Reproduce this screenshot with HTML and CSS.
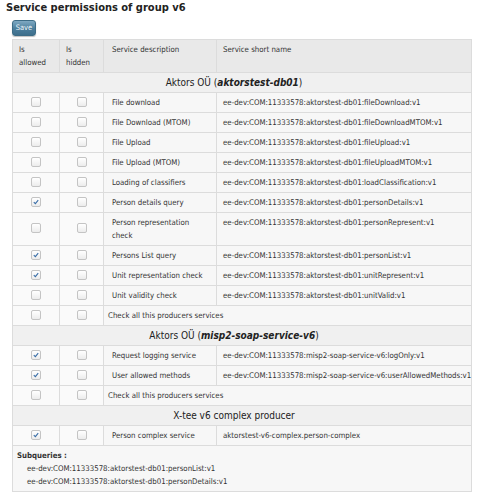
FILE: index.html
```html
<!DOCTYPE html>
<html>
<head>
<meta charset="utf-8">
<link rel="stylesheet" href="styles.css">
</head>
<body>
<h2 class="title">Service permissions of group v6</h2>
<div class="content">
  <button class="save">Save</button>
  <table class="perm">
    <colgroup><col class="c1"><col class="c2"><col class="c3"><col class="c4"></colgroup>
    <thead>
      <tr><th>Is<br>allowed</th><th>Is<br>hidden</th><th class="desc">Service description</th><th>Service short name</th></tr>
    </thead>
    <tbody>
      <tr class="group"><td colspan="4">Aktors OÜ (<i>aktorstest-db01</i>)</td></tr>
      <tr><td class="cb"><span class="box"></span></td><td class="cb"><span class="box"></span></td><td class="desc">File download</td><td>ee-dev:COM:11333578:aktorstest-db01:fileDownload:v1</td></tr>
      <tr><td class="cb"><span class="box"></span></td><td class="cb"><span class="box"></span></td><td class="desc">File Download (MTOM)</td><td>ee-dev:COM:11333578:aktorstest-db01:fileDownloadMTOM:v1</td></tr>
      <tr><td class="cb"><span class="box"></span></td><td class="cb"><span class="box"></span></td><td class="desc">File Upload</td><td>ee-dev:COM:11333578:aktorstest-db01:fileUpload:v1</td></tr>
      <tr><td class="cb"><span class="box"></span></td><td class="cb"><span class="box"></span></td><td class="desc">File Upload (MTOM)</td><td>ee-dev:COM:11333578:aktorstest-db01:fileUploadMTOM:v1</td></tr>
      <tr><td class="cb"><span class="box"></span></td><td class="cb"><span class="box"></span></td><td class="desc">Loading of classifiers</td><td>ee-dev:COM:11333578:aktorstest-db01:loadClassification:v1</td></tr>
      <tr><td class="cb"><span class="box checked"><svg viewBox="0 0 9 9"><path d="M2 4.6 L3.8 6.4 L7 2.4"/></svg></span></td><td class="cb"><span class="box"></span></td><td class="desc">Person details query</td><td>ee-dev:COM:11333578:aktorstest-db01:personDetails:v1</td></tr>
      <tr><td class="cb"><span class="box"></span></td><td class="cb"><span class="box"></span></td><td class="desc">Person representation check</td><td class="top">ee-dev:COM:11333578:aktorstest-db01:personRepresent:v1</td></tr>
      <tr><td class="cb"><span class="box checked"><svg viewBox="0 0 9 9"><path d="M2 4.6 L3.8 6.4 L7 2.4"/></svg></span></td><td class="cb"><span class="box"></span></td><td class="desc">Persons List query</td><td>ee-dev:COM:11333578:aktorstest-db01:personList:v1</td></tr>
      <tr><td class="cb"><span class="box checked"><svg viewBox="0 0 9 9"><path d="M2 4.6 L3.8 6.4 L7 2.4"/></svg></span></td><td class="cb"><span class="box"></span></td><td class="desc">Unit representation check</td><td>ee-dev:COM:11333578:aktorstest-db01:unitRepresent:v1</td></tr>
      <tr><td class="cb"><span class="box"></span></td><td class="cb"><span class="box"></span></td><td class="desc">Unit validity check</td><td>ee-dev:COM:11333578:aktorstest-db01:unitValid:v1</td></tr>
      <tr class="all"><td class="cb"><span class="box"></span></td><td class="cb"><span class="box"></span></td><td class="checkall" colspan="2">Check all this producers services</td></tr>
      <tr class="group"><td colspan="4">Aktors OÜ (<i>misp2-soap-service-v6</i>)</td></tr>
      <tr><td class="cb"><span class="box checked"><svg viewBox="0 0 9 9"><path d="M2 4.6 L3.8 6.4 L7 2.4"/></svg></span></td><td class="cb"><span class="box"></span></td><td class="desc">Request logging service</td><td>ee-dev:COM:11333578:misp2-soap-service-v6:logOnly:v1</td></tr>
      <tr><td class="cb"><span class="box checked"><svg viewBox="0 0 9 9"><path d="M2 4.6 L3.8 6.4 L7 2.4"/></svg></span></td><td class="cb"><span class="box"></span></td><td class="desc">User allowed methods</td><td>ee-dev:COM:11333578:misp2-soap-service-v6:userAllowedMethods:v1</td></tr>
      <tr class="all"><td class="cb"><span class="box"></span></td><td class="cb"><span class="box"></span></td><td class="checkall" colspan="2">Check all this producers services</td></tr>
      <tr class="group"><td colspan="4">X-tee v6 complex producer</td></tr>
      <tr><td class="cb"><span class="box checked"><svg viewBox="0 0 9 9"><path d="M2 4.6 L3.8 6.4 L7 2.4"/></svg></span></td><td class="cb"><span class="box"></span></td><td class="desc">Person complex service</td><td>aktorstest-v6-complex.person-complex</td></tr>
      <tr class="sub"><td colspan="4"><b>Subqueries :</b><div class="subline">ee-dev:COM:11333578:aktorstest-db01:personList:v1</div><div class="subline">ee-dev:COM:11333578:aktorstest-db01:personDetails:v1</div></td></tr>
    </tbody>
  </table>
</div>
</body>
</html>
```
FILE: styles.css
```css
html, body {
  margin: 0;
  padding: 0;
  background: #ffffff;
}
body {
  font-family: "DejaVu Sans Condensed", "DejaVu Sans", sans-serif;
  font-stretch: condensed;
  color: #333333;
  font-size: 7.8px;
}
.title {
  margin: 0;
  padding: 1px 0 0 6px;
  font-size: 11px;
  line-height: 14px;
  font-weight: bold;
  color: #222222;
}
.content {
  padding: 5px 0 0 12px;
}
.save {
  display: block;
  width: 24px;
  height: 16px;
  padding: 0;
  margin: 0 0 3px 0;
  border: 1px solid #3d6c86;
  border-radius: 3px;
  background: linear-gradient(#7fa9c2, #4b7e9c 55%, #3e6f8c);
  color: #eef5f9;
  font-family: inherit;
  font-stretch: condensed;
  font-size: 7.5px;
  line-height: 14px;
  box-shadow: 0 1px 1px rgba(0,0,0,0.25);
}
.perm {
  width: 459px;
  table-layout: fixed;
  border-collapse: collapse;
  border: 1px solid #d0d0d0;
}
.c1 { width: 47px; }
.c2 { width: 44px; }
.c3 { width: 113px; }
.c4 { width: 255px; }
.perm th, .perm td {
  border: 1px solid #dcdcdc;
  padding: 3px 6px;
  line-height: 13px;
  height: 13px;
  font-size: 7.8px;
  text-align: left;
  vertical-align: middle;
  background: #f7f7f7;
  white-space: nowrap;
}
.perm th {
  font-weight: normal;
  background: #e9e9e9;
  vertical-align: top;
}
.perm .desc {
  padding-left: 8px;
  white-space: normal;
}
.perm td.top {
  vertical-align: top;
}
.perm td.cb {
  text-align: center;
  padding: 3px 0;
  background: #fafafa;
}
.perm td.checkall {
  padding-left: 4px;
}
.perm .group td {
  background: #f0f0f0;
  text-align: center;
  font-size: 10px;
  padding-right: 22px;
  color: #222222;
}
.perm .group i {
  font-weight: 600;
}
.box {
  display: inline-block;
  vertical-align: middle;
  width: 8px;
  height: 8px;
  border: 1px solid #c4c4c4;
  border-radius: 2px;
  background: linear-gradient(#ffffff, #ececec);
  position: relative;
  top: -1px;
}
.box svg {
  display: block;
  width: 8px;
  height: 8px;
}
.box svg path {
  fill: none;
  stroke: #3a6ea8;
  stroke-width: 1.2;
}
.perm .sub td {
  padding: 3px 4px;
  background: #f7f7f7;
}
.perm .sub b {
  color: #333333;
}
.subline {
  padding-left: 10px;
}
```
